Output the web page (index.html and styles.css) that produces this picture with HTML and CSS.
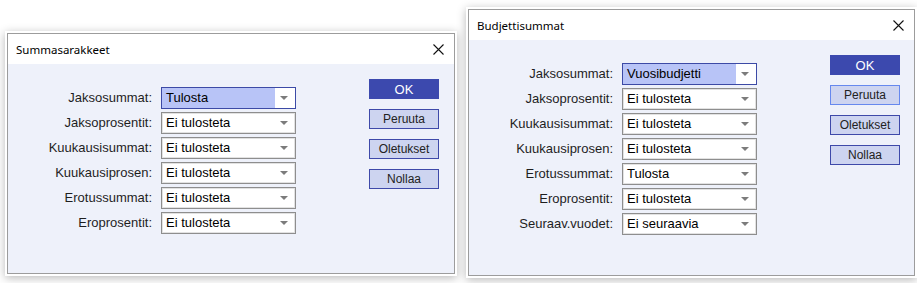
FILE: index.html
```html
<!DOCTYPE html>
<html lang="fi">
<head>
<meta charset="utf-8">
<title>Dialogs</title>
<link rel="stylesheet" href="styles.css">
</head>
<body>
<div class="desk">
  <div class="window win-left">
    <div class="frame">
      <div class="titlebar">
        <span class="title">Summasarakkeet</span>
        <svg class="close" width="11" height="11" viewBox="0 0 11 11"><path d="M0.5 0.5 L10.5 10.5 M10.5 0.5 L0.5 10.5" stroke="#111" stroke-width="1.1" fill="none"/></svg>
      </div>
      <div class="body">
        <div class="form">
          <span class="lbl">Jaksosummat:</span>
          <div class="combo selected"><span class="val">Tulosta</span><span class="btn"><span class="arrow"></span></span></div>
          <span class="lbl">Jaksoprosentit:</span>
          <div class="combo"><span class="val">Ei tulosteta</span><span class="btn"><span class="arrow"></span></span></div>
          <span class="lbl">Kuukausisummat:</span>
          <div class="combo"><span class="val">Ei tulosteta</span><span class="btn"><span class="arrow"></span></span></div>
          <span class="lbl">Kuukausiprosen:</span>
          <div class="combo"><span class="val">Ei tulosteta</span><span class="btn"><span class="arrow"></span></span></div>
          <span class="lbl">Erotussummat:</span>
          <div class="combo"><span class="val">Ei tulosteta</span><span class="btn"><span class="arrow"></span></span></div>
          <span class="lbl">Eroprosentit:</span>
          <div class="combo"><span class="val">Ei tulosteta</span><span class="btn"><span class="arrow"></span></span></div>
        </div>
        <div class="buttons">
          <div class="button ok">OK</div>
          <div class="button">Peruuta</div>
          <div class="button">Oletukset</div>
          <div class="button">Nollaa</div>
        </div>
      </div>
    </div>
  </div>

  <div class="window win-right">
    <div class="frame">
      <div class="titlebar">
        <span class="title">Budjettisummat</span>
        <svg class="close" width="11" height="11" viewBox="0 0 11 11"><path d="M0.5 0.5 L10.5 10.5 M10.5 0.5 L0.5 10.5" stroke="#111" stroke-width="1.1" fill="none"/></svg>
      </div>
      <div class="body">
        <div class="form">
          <span class="lbl">Jaksosummat:</span>
          <div class="combo selected"><span class="val">Vuosibudjetti</span><span class="btn"><span class="arrow"></span></span></div>
          <span class="lbl">Jaksoprosentit:</span>
          <div class="combo"><span class="val">Ei tulosteta</span><span class="btn"><span class="arrow"></span></span></div>
          <span class="lbl">Kuukausisummat:</span>
          <div class="combo"><span class="val">Ei tulosteta</span><span class="btn"><span class="arrow"></span></span></div>
          <span class="lbl">Kuukausiprosen:</span>
          <div class="combo"><span class="val">Ei tulosteta</span><span class="btn"><span class="arrow"></span></span></div>
          <span class="lbl">Erotussummat:</span>
          <div class="combo"><span class="val">Tulosta</span><span class="btn"><span class="arrow"></span></span></div>
          <span class="lbl">Eroprosentit:</span>
          <div class="combo"><span class="val">Ei tulosteta</span><span class="btn"><span class="arrow"></span></span></div>
          <span class="lbl">Seuraav.vuodet:</span>
          <div class="combo"><span class="val">Ei seuraavia</span><span class="btn"><span class="arrow"></span></span></div>
        </div>
        <div class="buttons">
          <div class="button ok">OK</div>
          <div class="button focus">Peruuta</div>
          <div class="button">Oletukset</div>
          <div class="button">Nollaa</div>
        </div>
      </div>
    </div>
  </div>
</div>
</body>
</html>
```

FILE: styles.css
```css
html, body {
  margin: 0;
  padding: 0;
  background: #ffffff;
}

.desk {
  position: relative;
  width: 917px;
  height: 283px;
  overflow: hidden;
}

.window {
  position: absolute;
  padding: 2px;
  background: #ffffff;
  box-shadow: 0 2px 9px rgba(0, 0, 0, 0.28);
  display: flex;
}

.win-left {
  left: 5px;
  top: 31px;
  width: 448px;
  height: 241px;
}

.win-right {
  left: 466px;
  top: 7px;
  width: 447px;
  height: 267px;
}

.frame {
  flex: 1;
  border: 1px solid #9c9c9c;
  display: flex;
  flex-direction: column;
}

.titlebar {
  height: 30px;
  flex: none;
  background: #ffffff;
  display: flex;
  align-items: center;
  justify-content: space-between;
  padding: 0 10px 0 8px;
}

.title {
  font-family: "Noto Sans", "Open Sans", sans-serif;
  font-size: 11.5px;
  color: #000000;
}

.close {
  display: block;
}

.body {
  flex: 1;
  background: #eef1fa;
  display: flex;
  align-items: flex-start;
  padding-top: 15px;
}

.form {
  margin-top: 8px;
  display: grid;
  grid-template-columns: 144px 135px;
  grid-auto-rows: 22px;
  column-gap: 9px;
  row-gap: 3px;
}

.lbl {
  font-family: "Liberation Sans", Arial, sans-serif;
  font-size: 13px;
  color: #1e1e1e;
  text-align: right;
  line-height: 22px;
}

.combo {
  box-sizing: border-box;
  display: flex;
  background: #ffffff;
  border: 1px solid #8e8e8e;
  box-shadow: inset 0 0 0 1px #e2e2e2;
  font-family: "Liberation Sans", Arial, sans-serif;
  font-size: 13px;
  color: #000000;
}

.val {
  flex: 1;
  padding-left: 4px;
  line-height: 20px;
  white-space: nowrap;
}

.btn {
  width: 17px;
  flex: none;
  display: flex;
  align-items: center;
  justify-content: center;
  padding-right: 3px;
}

.arrow {
  width: 0;
  height: 0;
  border-left: 4px solid transparent;
  border-right: 4px solid transparent;
  border-top: 4px solid #7c7c7c;
}

.combo.selected {
  border-color: #3c4aa6;
  box-shadow: none;
}

.combo.selected .val {
  background: #b8c4f7;
}

.buttons {
  margin-left: 73px;
  display: flex;
  flex-direction: column;
  gap: 10px;
}

.button {
  box-sizing: border-box;
  width: 70px;
  height: 20px;
  background: #cdd4f0;
  border: 1px solid #3e49a9;
  font-family: "Liberation Sans", Arial, sans-serif;
  font-size: 12px;
  color: #222222;
  display: flex;
  align-items: center;
  justify-content: center;
}

.button.ok {
  background: #3c49ae;
  border-color: #3c49ae;
  color: #ffffff;
  font-size: 13px;
}

.button.focus {
  border-color: #6688ee;
}
```
